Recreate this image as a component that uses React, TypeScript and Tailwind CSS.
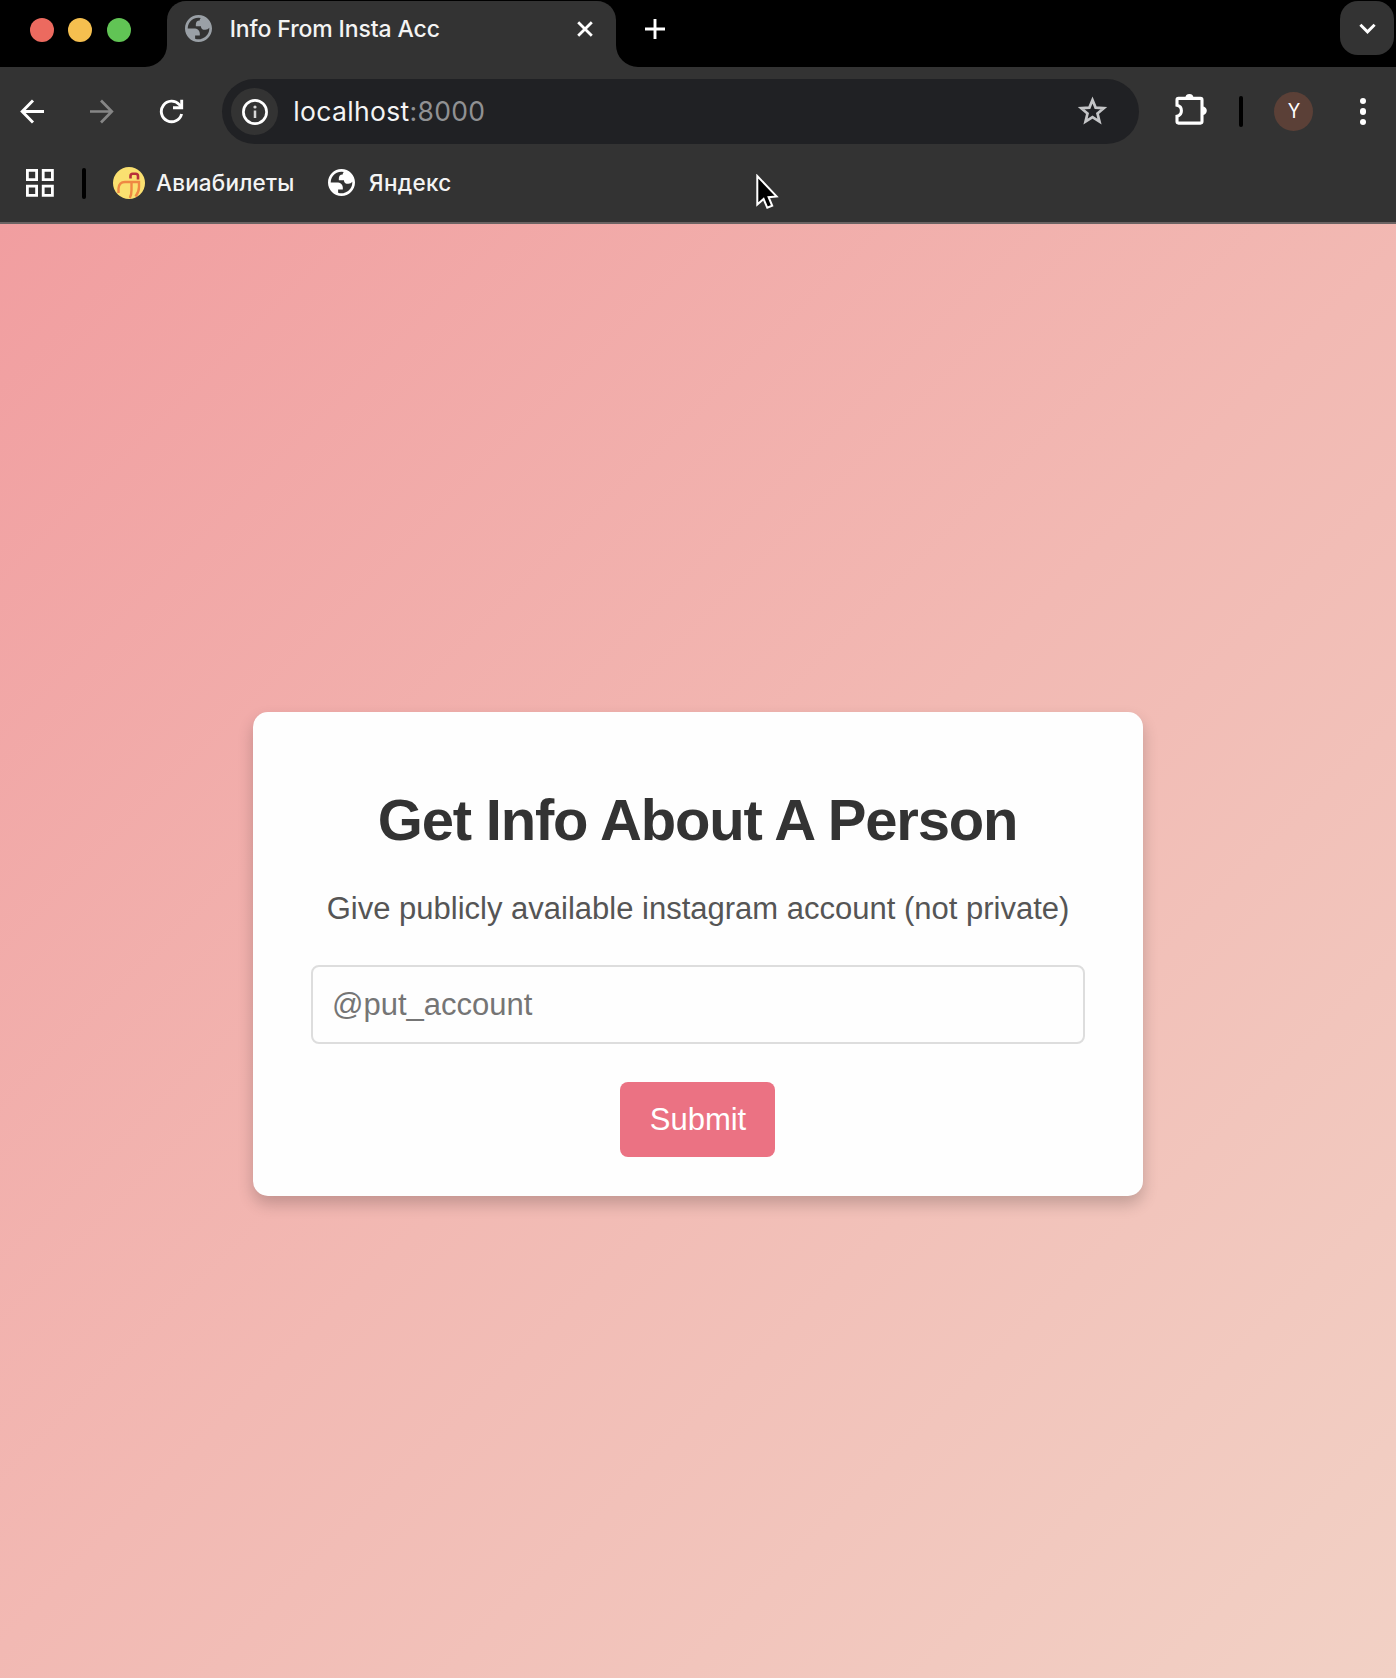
import React from "react";

function Globe({ color, className }: { color: string; className: string }) {
  return (
    <svg viewBox="2 2 20 20" className={className}>
      <path
        fill={color}
        fillRule="evenodd"
        d="M12 2C6.48 2 2 6.48 2 12s4.48 10 10 10 10-4.48 10-10S17.52 2 12 2zM4 12h4.4c3.407.022 4.922 1.73 4.543 5.127H9.488v2.47a8.004 8.004 0 0 0 10.498-8.08C19.327 12.5 18.332 13 17 13c-2.137 0-3.206-.916-3.206-2.75h-3.748c-.274-2.728.683-4.092 2.87-4.092 0-.975.327-1.597.811-1.97A8.004 8.004 0 0 0 4 12z"
      />
    </svg>
  );
}

function TabStrip() {
  return (
    <div className="flex h-[67px] shrink-0 items-start bg-black">
      <div className="ml-[29.7px] mt-[17.5px] flex gap-[14.8px]">
        <span className="size-[24px] rounded-full bg-[#ec6a5f]" />
        <span className="size-[24px] rounded-full bg-[#f5bf4f]" />
        <span className="size-[24px] rounded-full bg-[#61c455]" />
      </div>
      <div className="relative ml-[36px] mt-[1.4px] flex h-[66px] w-[448.5px] items-start rounded-t-[19px] bg-[#333333]">
        <svg className="absolute bottom-0 left-[-22px] size-[22px]" viewBox="0 0 22 22">
          <path d="M22 0 V22 H0 A22 22 0 0 0 22 0Z" fill="#333333" />
        </svg>
        <svg className="absolute bottom-0 right-[-22px] size-[22px]" viewBox="0 0 22 22">
          <path d="M0 0 V22 H22 A22 22 0 0 1 0 0Z" fill="#333333" />
        </svg>
        <Globe color="#9aa0a6" className="ml-[17.9px] mt-[13.7px] size-[27px]" />
        <span className="ml-[17.5px] mt-[11.6px] whitespace-nowrap text-[23px] font-medium leading-[32px] tracking-[-0.12px] text-[#f4f4f4]">
          Info From Insta Acc
        </span>
        <svg className="ml-auto mr-[22.5px] mt-[19.2px] size-[16px]" viewBox="0 0 16 16">
          <path d="M1.2 1.2 L14.8 14.8 M14.8 1.2 L1.2 14.8" stroke="#fff" strokeWidth="2.8" />
        </svg>
      </div>
      <svg className="ml-[28.8px] mt-[18.5px] size-[20px]" viewBox="0 0 20 20">
        <path d="M10 0 V20 M0 10 H20" stroke="#fff" strokeWidth="2.9" />
      </svg>
      <div className="ml-auto mr-[2px] mt-[1.4px] flex size-[54px] items-center justify-center rounded-[18px] bg-[#333333]">
        <svg className="size-[17px]" viewBox="0 0 17 17">
          <path d="M1.4 4.8 L8.5 11.9 L15.6 4.8" fill="none" stroke="#fff" strokeWidth="2.9" />
        </svg>
      </div>
    </div>
  );
}

function Toolbar() {
  return (
    <div className="flex h-[89px] shrink-0 items-center">
      <svg className="ml-[20px] size-[25px]" viewBox="0 0 25 25">
        <path d="M13 1.5 L2.2 12.5 L13 23.5 M2.2 12.5 H24" fill="none" stroke="#fff" strokeWidth="2.9" />
      </svg>
      <svg className="ml-[44px] size-[25px]" viewBox="0 0 25 25">
        <path d="M12 1.5 L22.8 12.5 L12 23.5 M22.8 12.5 H1" fill="none" stroke="#868686" strokeWidth="2.7" />
      </svg>
      <svg className="ml-[44.5px] size-[25px]" viewBox="0 0 25 25">
        <path d="M22.6 15 A10.3 10.3 0 1 1 20.3 5.6 L22.6 8.2" fill="none" stroke="#fff" strokeWidth="2.9" />
        <path d="M22.7 0.8 V8.8 H14" fill="none" stroke="#fff" strokeWidth="2.9" />
      </svg>
      <div className="ml-[38.5px] flex h-[65px] w-[917px] items-center rounded-full bg-[#202124]">
        <div className="ml-[9px] flex size-[47px] items-center justify-center rounded-full bg-[#333333]">
          <svg className="size-[26px]" viewBox="0 0 26 26">
            <circle cx="13" cy="13" r="11.6" fill="none" stroke="#fff" strokeWidth="2.7" />
            <path d="M13 11.5 V19" stroke="#d8d8d8" strokeWidth="2.5" />
            <circle cx="13" cy="8" r="1.6" fill="#d8d8d8" />
          </svg>
        </div>
        <span className="ml-[15.3px] mt-[-1px] whitespace-nowrap text-[26.5px] leading-[36px] tracking-[0.33px] text-[#f4f4f4]">
          localhost<span className="text-[#909193]">:8000</span>
        </span>
        <svg className="ml-auto mr-[31px] size-[31px]" viewBox="0 0 31 31">
          <path
            d="M15.5 4 L18.6 11.6 L26.8 12.2 L20.5 17.5 L22.5 25.6 L15.5 21.2 L8.5 25.6 L10.5 17.5 L4.2 12.2 L12.4 11.6Z"
            fill="none"
            stroke="#c4c5c7"
            strokeWidth="2.7"
          />
        </svg>
      </div>
      <svg className="ml-[36px] mt-[-4px] size-[33px]" viewBox="0 0 33 33">
        <path
          d="M3.5 5.4 H25.5 Q27 5.4 27 6.9 V28.6 Q27 30.1 25.5 30.1 H3.5 Q2 30.1 2 28.6 V23.2 C4.8 22.6 6.4 20.6 6.4 17.8 C6.4 15 4.8 12.9 2 12.3 V6.9 Q2 5.4 3.5 5.4Z"
          fill="none"
          stroke="#fff"
          strokeWidth="3.1"
        />
        <path d="M10.4 5 A4 4 0 0 1 18.4 5Z M27.6 13.6 A4.2 4.2 0 0 1 27.6 22Z" fill="#fff" />
      </svg>
      <span className="ml-[31.2px] h-[31px] w-[4px] rounded-full bg-black" />
      <span className="ml-[31px] flex size-[39px] items-center justify-center rounded-full bg-[#5b4037] text-[20.5px] leading-none text-white">
        <span className="scale-x-90">Y</span>
      </span>
      <div className="ml-[46.8px] flex flex-col gap-[4.4px]">
        <span className="size-[6.4px] rounded-full bg-white" />
        <span className="size-[6.4px] rounded-full bg-white" />
        <span className="size-[6.4px] rounded-full bg-white" />
      </div>
    </div>
  );
}

function Bookmarks() {
  return (
    <div className="relative flex h-[66px] shrink-0 items-start pt-[11px] text-[22.5px] font-medium leading-[32px] text-[#f4f4f4]">
      <svg className="ml-[25.6px] mt-[2.3px] size-[28px]" viewBox="0 0 28 28">
        <path
          d="M1.4 1.4 H10.6 V10.6 H1.4Z M17.2 1.4 H26.4 V10.6 H17.2Z M1.4 17.2 H10.6 V26.4 H1.4Z M17.2 17.2 H26.4 V26.4 H17.2Z"
          fill="none"
          stroke="#fff"
          strokeWidth="2.8"
        />
      </svg>
      <span className="ml-[28.4px] mt-[0.5px] h-[31px] w-[4px] rounded-full bg-black" />
      <svg className="ml-[27px] size-[32px]" viewBox="0 0 32 32">
        <circle cx="16" cy="16" r="16" fill="#fae070" />
        <path d="M17.5 11.5 V9 Q17.5 6.8 19.7 6.8 H22.6 Q25 6.8 25 9 V12.5" fill="none" stroke="#b8303a" strokeWidth="2.6" />
        <path
          d="M5.5 26 V21.5 Q6 15 12 15 H26 V20 Q26 25 22.5 29.5 M18.5 15 V23 Q18.5 28 16.8 31"
          fill="none"
          stroke="#ef8843"
          strokeWidth="2.4"
        />
      </svg>
      <span className="ml-[11px] whitespace-nowrap tracking-[0.2px]">Авиабилеты</span>
      <Globe color="#ffffff" className="ml-[33px] mt-[2.3px] size-[27px]" />
      <span className="ml-[14.4px] whitespace-nowrap tracking-[0.3px]">Яндекс</span>
      <svg className="absolute left-[755px] top-[17.5px] h-[36px] w-[25px]" viewBox="0 0 25 36">
        <path
          d="M2.3 2 V30.5 L8.6 25 L12.3 33.8 L17.2 31.8 L13.6 23.2 L21.6 22.4Z"
          fill="#000"
          stroke="#fff"
          strokeWidth="2"
        />
      </svg>
    </div>
  );
}

export default function App() {
  return (
    <div className="flex h-[1678px] w-[1396px] flex-col overflow-hidden bg-[#333333] font-['Inter',sans-serif]">
      <TabStrip />
      <Toolbar />
      <Bookmarks />
      <div className="h-[2px] shrink-0 bg-[#6b6363]" />
      <main className="flex flex-1 items-start justify-center bg-[linear-gradient(135deg,#f19ea0_0%,#f2b9b3_50%,#f2d1c5_100%)] pt-[488px] font-['Liberation_Sans',Arial,sans-serif]">
        <section className="mr-[1px] flex h-[484px] w-[890px] flex-col items-center rounded-[15px] bg-[#fefefe] px-[58px] shadow-[0_8px_16px_rgba(0,0,0,0.2)]">
          <h1 className="mt-[75px] whitespace-nowrap text-[58px] font-bold leading-[66px] tracking-[-1.2px] text-[#333333]">
            Get Info About A Person
          </h1>
          <p className="ml-[1px] mt-[38px] whitespace-nowrap text-[31px] leading-[36px] text-[#555555]">
            Give publicly available instagram account (not private)
          </p>
          <input
            className="mt-[38px] h-[79px] w-full shrink-0 rounded-[8px] border-2 border-[#dddddd] bg-[#fefefe] px-[19.5px] text-[31px] placeholder:text-[#757575]"
            placeholder="@put_account"
          />
          <button className="mt-[38px] h-[75px] w-[155px] shrink-0 rounded-[8px] bg-[#eb7283] pl-[1px] pt-[2px] text-[31px] text-white">
            Submit
          </button>
        </section>
      </main>
    </div>
  );
}
